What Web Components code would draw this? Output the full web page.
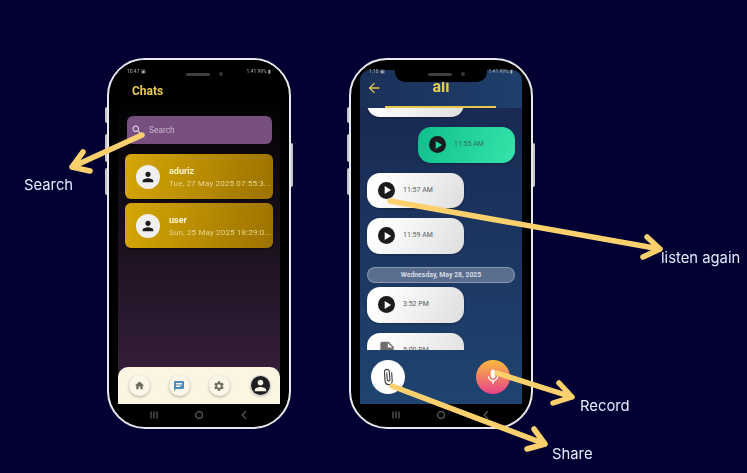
<!DOCTYPE html>
<html lang="en">
<head>
<meta charset="utf-8">
<title>Chat app screens</title>
<style>
  html, body { margin: 0; height: 473px; overflow: hidden; background: #020033; }
  body { font-family: Roboto, "Liberation Sans", sans-serif; }
  .stage { display: flex; gap: 58px; padding: 58px 0 0 107px; }
</style>
</head>
<body>
<div class="stage">
  <phone-frame>
    <chat-list-screen>
      <chat-card name="aduriz" date="Tue, 27 May 2025 07:55:3..."></chat-card>
      <chat-card name="user" date="Sun, 25 May 2025 18:29:0..."></chat-card>
    </chat-list-screen>
  </phone-frame>
  <phone-frame notch>
    <chat-screen title="ali">
      <voice-bubble class="cut"></voice-bubble>
      <voice-bubble mine time="11:55 AM"></voice-bubble>
      <voice-bubble time="11:57 AM"></voice-bubble>
      <voice-bubble time="11:59 AM"></voice-bubble>
      <date-pill>Wednesday, May 28, 2025</date-pill>
      <voice-bubble time="3:52 PM"></voice-bubble>
      <voice-bubble file time="5:00 PM"></voice-bubble>
    </chat-screen>
  </phone-frame>
</div>
<note-layer></note-layer>

<script>
//iconos material, todos en viewBox 0 0 24 24
const ICONS = {
  home: "M10 20v-6h4v6h5v-8h3L12 3 2 12h3v8z",
  chat: "M20 2H4c-1.1 0-2 .9-2 2v18l4-4h14c1.1 0 2-.9 2-2V4c0-1.1-.9-2-2-2zM6 9h12v2H6V9zm8 5H6v-2h8v2zm4-6H6V6h12v2z",
  gear: "M19.14 12.94c.04-.3.06-.61.06-.94 0-.32-.02-.64-.07-.94l2.03-1.58c.18-.14.23-.41.12-.61l-1.92-3.32c-.12-.22-.37-.29-.59-.22l-2.39.96c-.5-.38-1.03-.7-1.62-.94l-.36-2.54c-.04-.24-.24-.41-.48-.41h-3.84c-.24 0-.43.17-.47.41l-.36 2.54c-.59.24-1.13.57-1.62.94l-2.39-.96c-.22-.08-.47 0-.59.22L2.74 8.87c-.12.21-.08.47.12.61l2.03 1.58c-.05.3-.09.63-.09.94s.02.64.07.94l-2.03 1.58c-.18.14-.23.41-.12.61l1.92 3.32c.12.22.37.29.59.22l2.39-.96c.5.38 1.03.7 1.62.94l.36 2.54c.05.24.24.41.48.41h3.84c.24 0 .44-.17.47-.41l.36-2.54c.59-.24 1.13-.56 1.62-.94l2.39.96c.22.08.47 0 .59-.22l1.92-3.32c.12-.22.07-.47-.12-.61l-2.01-1.58zM12 15.6c-1.98 0-3.6-1.62-3.6-3.6s1.62-3.6 3.6-3.6 3.6 1.62 3.6 3.6-1.62 3.6-3.6 3.6z",
  person: "M12 12c2.21 0 4-1.79 4-4s-1.79-4-4-4-4 1.79-4 4 1.79 4 4 4zm0 2c-2.67 0-8 1.34-8 4v2h16v-2c0-2.66-5.33-4-8-4z",
  mic: "M12 14c1.66 0 3-1.34 3-3V5c0-1.66-1.34-3-3-3S9 3.34 9 5v6c0 1.66 1.34 3 3 3zm5.3-3c0 3-2.54 5.1-5.3 5.1S6.7 14 6.7 11H5c0 3.41 2.72 6.23 6 6.72V21h2v-3.28c3.28-.48 6-3.3 6-6.72h-1.7z",
  clip: "M16.5 6v11.5c0 2.21-1.79 4-4 4s-4-1.79-4-4V5c0-1.38 1.12-2.5 2.5-2.5s2.5 1.12 2.5 2.5v10.5c0 .55-.45 1-1 1s-1-.45-1-1V6H10v9.5c0 1.38 1.12 2.5 2.5 2.5s2.5-1.12 2.5-2.5V5c0-2.21-1.79-4-4-4S7 2.79 7 5v12.5c0 3.04 2.46 5.5 5.5 5.5s5.5-2.46 5.5-5.5V6h-1.5z",
  back: "M20 11H7.83l5.59-5.59L12 4l-8 8 8 8 1.41-1.41L7.83 13H20v-2z",
  file: "M6 2c-1.1 0-1.99.9-1.99 2L4 20c0 1.1.89 2 1.99 2H18c1.1 0 2-.9 2-2V8l-6-6H6zm7 7V3.5L18.5 9H13z",
  search: "M15.5 14h-.79l-.28-.27C15.41 12.59 16 11.11 16 9.5 16 5.91 13.09 3 9.5 3S3 5.91 3 9.5 5.91 16 9.5 16c1.61 0 3.09-.59 4.23-1.57l.27.28v.79l5 4.99L20.49 19l-4.99-5zm-6 0C7.01 14 5 11.99 5 9.5S7.01 5 9.5 5 14 7.01 14 9.5 11.99 14 9.5 14z",
  play: "M8 5v14l11-7z"
};
function icon(name, size, color) {
  return `<svg width="${size}" height="${size}" viewBox="0 0 24 24" fill="${color}" style="display:block"><path d="${ICONS[name]}"/></svg>`;
}

////////////////////////////////////////////////////////////
class PhoneFrame extends HTMLElement {
  constructor() {
    super();
    const shadow = this.attachShadow({ mode: "open" });
    const notch = this.hasAttribute("notch");
    shadow.innerHTML = `
    <style>
      :host { display: block; position: relative; width: 184px; height: 371px; flex: none; }
      .body {
        box-sizing: border-box; width: 100%; height: 100%;
        background: #000; border: 2px solid #e6e8ec; border-radius: 38px;
        display: flex; flex-direction: column; overflow: hidden; position: relative;
      }
      .screen { height: 344px; padding: 0 9px; display: flex; flex: none; filter: blur(.35px); }
      ::slotted(*) { flex: 1; min-width: 0; }
      .status {
        position: absolute; top: 7.5px; left: 18px; right: 18px; z-index: 2;
        display: flex; justify-content: space-between;
        font-size: 5px; line-height: 6px; color: #b0b0b0; filter: blur(.3px);
      }
      .ear {
        position: absolute; top: 12.5px; left: 76.5px; width: 24px; height: 3px; z-index: 4;
        border-radius: 2px; background: #3f3f3f;
      }
      .cam {
        position: absolute; top: 12px; left: 109.5px; width: 4px; height: 4px; z-index: 4;
        border-radius: 50%; background: #333;
      }
      .notch {
        position: absolute; top: 0; left: 44px; width: 92px; height: 22px; z-index: 3;
        background: #000; border-radius: 0 0 10px 10px;
      }
      .keys { flex: 1; display: flex; align-items: center; justify-content: center; gap: 33px; padding-bottom: 1px; filter: blur(.3px); }
      .side { position: absolute; width: 3px; background: #c4c6cc; }
      .l { left: -2px; border-radius: 2px 0 0 2px; }
      .r { right: -2px; border-radius: 0 2px 2px 0; top: 85px; height: 44px; }
    </style>
    <span class="side l" style="top:49px;height:16px"></span>
    <span class="side l" style="top:76px;height:28px"></span>
    <span class="side l" style="top:110px;height:27px"></span>
    <span class="side r"></span>
    <div class="body">
      <div class="status"><span>${notch ? "1:10" : "10:47"} ▣</span><span>1.41 99% ▮</span></div>
      ${notch ? `<div class="notch"></div>` : ""}
      <div class="ear"></div><div class="cam"></div>
      <div class="screen"><slot></slot></div>
      <div class="keys">
        <svg width="12" height="12" viewBox="0 0 12 12" fill="none" stroke="#5c5c5c" stroke-width="1.2"><path d="M3 2.5v7M6 2.5v7M9 2.5v7"/></svg>
        <svg width="12" height="12" viewBox="0 0 12 12" fill="none" stroke="#5c5c5c" stroke-width="1.2"><circle cx="6" cy="6" r="3.4"/></svg>
        <svg width="12" height="12" viewBox="0 0 12 12" fill="none" stroke="#5c5c5c" stroke-width="1.2"><path d="M8 2.2 4.2 6 8 9.8"/></svg>
      </div>
    </div>`;
  }
}

////////////////////////////////////////////////////////////
class ChatListScreen extends HTMLElement {
  constructor() {
    super();
    const shadow = this.attachShadow({ mode: "open" });
    shadow.innerHTML = `
    <style>
      :host { display: flex; flex-direction: column; background: linear-gradient(#000 10%, #3a2240 100%); }
      h1 {
        margin: 24px 0 0 14px; height: 14px;
        font: 700 12px/14px Roboto, sans-serif; color: #e9c755;
      }
      .search {
        box-sizing: border-box; margin: 18px 8px 0 9px; height: 28px; padding-left: 4px;
        display: flex; align-items: center; gap: 6px;
        background: #775080; border-radius: 6px;
        font-size: 8.4px; color: #c9b3cd;
      }
      .list { margin: 10px 7px 0; display: flex; flex-direction: column; gap: 4px; }
      nav {
        margin-top: auto; height: 37.5px; padding: 1px 0 0 10.5px; box-sizing: border-box;
        display: flex; align-items: center; gap: 19px;
        background: #fbf6e2; border-radius: 10px 10px 0 0;
      }
      .b {
        width: 21px; height: 21px; border-radius: 50%;
        display: flex; align-items: center; justify-content: center;
        background: #fbf7e8; box-shadow: 0 1px 3px rgba(0,0,0,.3);
      }
      .me { margin-left: 2px; background: #1e1e20; box-shadow: 0 0 0 1px #d9d9d9, 0 1px 3px rgba(0,0,0,.4); width: 19px; height: 19px; }
    </style>
    <h1>Chats</h1>
    <div class="search">${icon("search", 12, "#efe6f0")}<span>Search</span></div>
    <div class="list"><slot></slot></div>
    <nav>
      <div class="b">${icon("home", 11, "#6e6a5c")}</div>
      <div class="b">${icon("chat", 12, "#4f8ac0")}</div>
      <div class="b">${icon("gear", 12, "#6e6a5c")}</div>
      <div class="b me">${icon("person", 17, "#f5f2e6")}</div>
    </nav>`;
  }
}

class ChatCard extends HTMLElement {
  constructor() {
    super();
    this.attachShadow({ mode: "open" });
  }
  connectedCallback() {
    this.shadowRoot.innerHTML = `
    <style>
      :host {
        display: flex; align-items: center; gap: 9px; box-sizing: border-box;
        height: 45px; padding: 0 6px 0 11px; border-radius: 6px;
        background: linear-gradient(100deg, #d5a705, #9c7200);
        box-shadow: 0 1px 2px rgba(0,0,0,.6);
      }
      .av {
        width: 24px; height: 24px; border-radius: 50%; background: #efefef; flex: none;
        display: flex; align-items: center; justify-content: center;
      }
      .t { min-width: 0; flex: 1; display: flex; flex-direction: column; gap: 3px; padding-top: 1px; }
      b { font: 700 9px/10px Roboto, sans-serif; color: #fff4d2; }
      span { font: 400 8px/10px Roboto, sans-serif; letter-spacing: .02em; color: #e9d594; white-space: nowrap; }
    </style>
    <div class="av">${icon("person", 16, "#1c1c1c")}</div>
    <div class="t"><b>${this.getAttribute("name")}</b><span>${this.getAttribute("date")}</span></div>`;
  }
}

////////////////////////////////////////////////////////////
class ChatScreen extends HTMLElement {
  constructor() {
    super();
    this.attachShadow({ mode: "open" });
  }
  connectedCallback() {
    this.shadowRoot.innerHTML = `
    <style>
      :host {
        display: flex; flex-direction: column; margin-top: 10px; border-radius: 10px 10px 0 0;
        overflow: hidden; background: linear-gradient(#18264f, #1f4470);
      }
      header {
        position: relative; height: 36px; flex: none; border-bottom: 2px solid transparent;
        background: linear-gradient(90deg, #1a3058, #1e3f6c);
        display: flex; align-items: center; justify-content: center;
      }
      header svg { position: absolute; left: 6px; top: 10px; }
      h2 { margin: -3px 0 0; font: 700 16px/20px Roboto, sans-serif; color: #efcf45; }
      header i { position: absolute; left: 25px; bottom: -2px; width: 111px; height: 2px; background: #e7c649; }
      .list {
        flex: 1; min-height: 0; overflow: hidden; padding: 0 7px;
        display: flex; flex-direction: column; align-items: flex-start; gap: 10px;
      }
      .bar { height: 54px; flex: none; padding: 0 12px 0 11px; display: flex; align-items: center; justify-content: space-between; }
      .btn { width: 34px; height: 34px; border-radius: 50%; display: flex; align-items: center; justify-content: center; }
      .att { background: #fff; }
      .att svg { transform: rotate(-4deg); }
      .rec { background: linear-gradient(#f8bb3c, #e8428a); }
    </style>
    <header>
      ${icon("back", 16, "#e8c24e")}
      <h2>${this.getAttribute("title")}</h2>
      <i></i>
    </header>
    <div class="list"><slot></slot></div>
    <div class="bar">
      <div class="btn att">${icon("clip", 18, "#3c3c3c")}</div>
      <div class="btn rec">${icon("mic", 18, "#fff")}</div>
    </div>`;
  }
}

class VoiceBubble extends HTMLElement {
  constructor() {
    super();
    this.attachShadow({ mode: "open" });
  }
  connectedCallback() {
    const mine = this.hasAttribute("mine");
    const time = this.getAttribute("time") || "";
    const lead = this.hasAttribute("file")
      ? `<span class="doc">${icon("file", 20, "#6f6f6f")}</span>`
      : `<span class="pl">${icon("play", 14, mine ? "#1fd79c" : "#fff")}</span>`;
    this.shadowRoot.innerHTML = `
    <style>
      :host {
        box-sizing: border-box; flex: none; width: 97px; height: 35.5px; padding-left: 11px;
        display: flex; align-items: center; gap: 8px; border-radius: 13px;
        background: linear-gradient(120deg, #fff 15%, #dedede);
        box-shadow: 0 1px 2px rgba(0,0,0,.25);
      }
      :host([mine]) { align-self: flex-end; background: linear-gradient(110deg, #0fbf8c, #36e4aa); }
      :host(.cut) { margin-top: -26.5px; }
      .pl {
        width: 17px; height: 17px; border-radius: 50%; background: #1b1b1d; flex: none;
        display: flex; align-items: center; justify-content: center;
      }
      .doc { margin: 0 -2px 0 -1px; }
      span.t { font: 400 7px/9px Roboto, sans-serif; color: #5b5b5b; white-space: nowrap; }
      :host([mine]) span.t { color: #2f6f5d; }
    </style>
    ${lead}<span class="t">${time}</span>`;
  }
}

class DatePill extends HTMLElement {
  constructor() {
    super();
    const shadow = this.attachShadow({ mode: "open" });
    shadow.innerHTML = `
    <style>
      :host {
        box-sizing: border-box; align-self: stretch; flex: none; height: 16px; margin: 3.5px 0 -6px;
        display: flex; align-items: center; justify-content: center;
        background: rgba(255,255,255,.27); border: 1px solid rgba(255,255,255,.3); border-radius: 8px;
        font: 700 6.9px/1 Roboto, sans-serif; color: #d5dbe5;
      }
    </style><slot></slot>`;
  }
}

////////////////////////////////////////////////////////////
// flechas y rotulos van encima de los telefonos
class NoteLayer extends HTMLElement {
  constructor() {
    super();
    const shadow = this.attachShadow({ mode: "open" });
    const arrows = [
      "M142 135 72 167M83 152 72 167 90 171",
      "M390 201 660 249M647 237 660 249 643 257",
      "M497 373 572 397M559 383 572 397 553 403",
      "M392 386 545 444M534 429 545 444 527 449"
    ];
    const labels = [
      ["Search", 24, 176], ["listen again", 661, 249], ["Record", 580, 397], ["Share", 552, 445]
    ];
    shadow.innerHTML = `
    <style>
      :host { position: absolute; left: 0; top: 0; width: 747px; height: 473px; pointer-events: none; }
      svg { position: absolute; left: 0; top: 0; }
      span {
        position: absolute; font: 400 14.8px/18px Inter, sans-serif; color: #e6ebff; white-space: nowrap;
      }
    </style>
    <svg width="747" height="473" fill="none" stroke="#fdd06e" stroke-width="5.5" stroke-linejoin="round" stroke-linecap="round">
      ${arrows.map(d => `<path d="${d}"/>`).join("")}
    </svg>
    ${labels.map(l => `<span style="left:${l[1]}px;top:${l[2]}px">${l[0]}</span>`).join("")}`;
  }
}

window.customElements.define("phone-frame", PhoneFrame);
window.customElements.define("chat-list-screen", ChatListScreen);
window.customElements.define("chat-card", ChatCard);
window.customElements.define("chat-screen", ChatScreen);
window.customElements.define("voice-bubble", VoiceBubble);
window.customElements.define("date-pill", DatePill);
window.customElements.define("note-layer", NoteLayer);
</script>
</body>
</html>
